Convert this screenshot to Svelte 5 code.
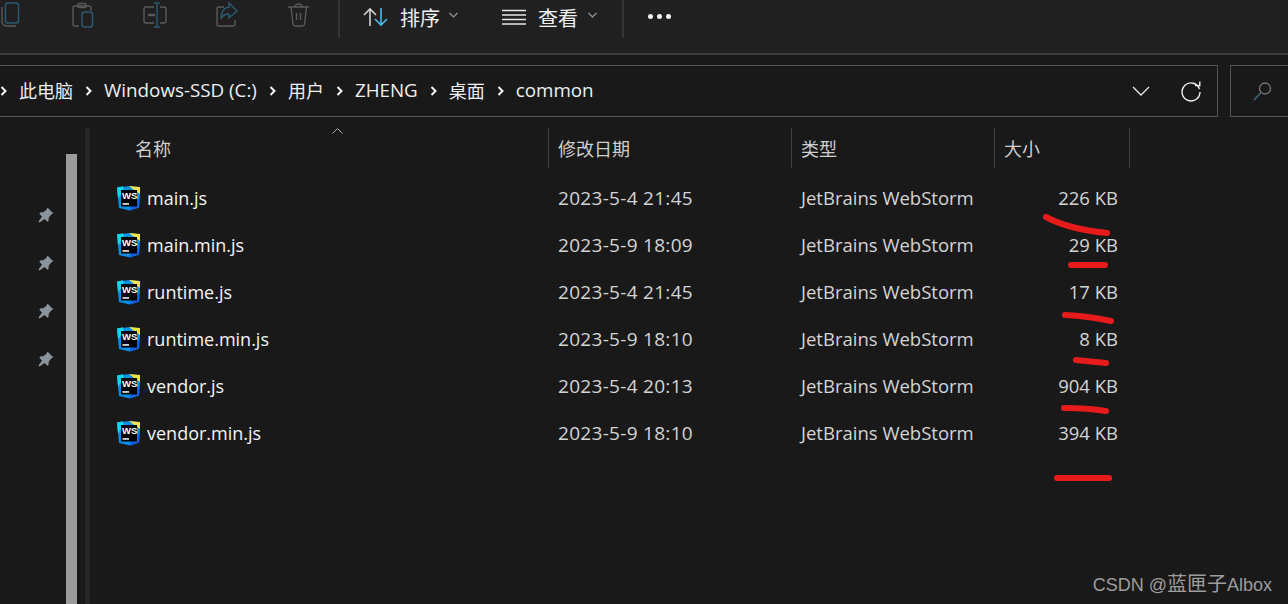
<script>
  const files = [
    { name: "main.js", date: "2023-5-4 21:45", size: "226 KB" },
    { name: "main.min.js", date: "2023-5-9 18:09", size: "29 KB" },
    { name: "runtime.js", date: "2023-5-4 21:45", size: "17 KB" },
    { name: "runtime.min.js", date: "2023-5-9 18:10", size: "8 KB" },
    { name: "vendor.js", date: "2023-5-4 20:13", size: "904 KB" },
    { name: "vendor.min.js", date: "2023-5-9 18:10", size: "394 KB" },
  ];
  const crumbs = ["此电脑", "Windows-SSD (C:)", "用户", "ZHENG", "桌面", "common"];
  const marks = [
    "M1046 217Q1068 229 1107 233",
    "M1071 265L1105 265",
    "M1065 315Q1088 316 1111 321",
    "M1076 360L1106 363",
    "M1064 408Q1088 408 1106 411",
    "M1057 478L1109 478",
  ];
  const isLatin = (s) => /^[\x00-\x7f]+$/.test(s);
</script>

<div class="page">
  <div class="toolbar">
    <div class="tools">
      <button>
        <svg width="24" height="28" viewBox="0 0 24 28" fill="none" stroke-width="1.4">
          <path d="M3 6v14q0 5 5 5h9" stroke="#5a5a5a" />
          <rect x="6.5" y="2" width="13" height="20" rx="2.5" stroke="#2b5a73" />
        </svg>
      </button>
      <button>
        <svg width="24" height="28" viewBox="0 0 24 28" fill="none" stroke-width="1.4">
          <path d="M8 25H4q-2 0-2-2V7q0-2 2-2h14q2 0 2 2v3" stroke="#5a5a5a" />
          <rect x="7" y="2.5" width="8" height="4" rx="1" stroke="#5a5a5a" />
          <rect x="11" y="11" width="10.500" height="15" rx="2.500" stroke="#2b5a73" />
        </svg>
      </button>
      <button>
        <svg width="26" height="28" viewBox="0 0 26 28" fill="none" stroke-width="1.4">
          <path d="M12 6H4q-2 0-2 2v12q0 2 2 2h8M18 6h4q2 0 2 2v12q0 2-2 2h-4" stroke="#5a5a5a" />
          <path d="M15 2v24M12 2h6M12 26h6" stroke="#2b5a73" />
          <path d="M6 14h7" stroke="#5a5a5a" stroke-width="2.400" />
        </svg>
      </button>
      <button>
        <svg width="24" height="28" viewBox="0 0 24 28" fill="none" stroke-width="1.4">
          <path d="M9 6H4Q2 6 2 8v15q0 2 2 2h14q2 0 2-2v-4" stroke="#5a5a5a" />
          <path d="M14 6V2l8 8-8 7v-4q-6 0-8 5 0-11 8-12z" stroke="#2b5a73" />
        </svg>
      </button>
      <button>
        <svg width="24" height="28" viewBox="0 0 24 28" fill="none" stroke="#5a5a5a" stroke-width="1.4">
          <path d="M1 6h21M8 6q0-3 3.500-3T15 6M4 6l2 17q.3 2 2.300 2h7q2 0 2.300-2L19.500 6M9.500 12v7M13.500 12v7" />
        </svg>
      </button>
    </div>
    <span class="sep first"></span>
    <div class="menu sort">
      <svg width="26" height="20" viewBox="0 0 26 20" fill="none" stroke-width="1.600">
        <path d="M7 19V2M1 8l6-6 6 6" stroke="#cfcfcf" />
        <path d="M18 1v17M12 12l6 6 6-6" stroke="#4cb8ee" />
      </svg>
      <span class="menu-label">排序</span>
      <svg class="caret" width="9" height="6" viewBox="0 0 9 6" fill="none" stroke="#9a9a9a" stroke-width="1.100"><path d="M.5 1l4 4 4-4" /></svg>
    </div>
    <div class="menu view">
      <svg width="24" height="16" viewBox="0 0 24 16" fill="none" stroke="#e6e6e6" stroke-width="1.300">
        <path d="M0 1.500h24M0 6h24M0 10.500h24M0 15h24" />
      </svg>
      <span class="menu-label">查看</span>
      <svg class="caret" width="9" height="6" viewBox="0 0 9 6" fill="none" stroke="#9a9a9a" stroke-width="1.100"><path d="M.5 1l4 4 4-4" /></svg>
    </div>
    <span class="sep second"></span>
    <div class="dots"><i></i><i></i><i></i></div>
  </div>

  <div class="address-row">
    <div class="address">
      <div class="crumbs">
        <svg class="chev" width="7" height="10" viewBox="0 0 7 10" fill="none" stroke="#f4f4f4" stroke-width="2"><path d="M1.500 1l4 4-4 4" /></svg>
        {#each crumbs as c, i}
          {#if i > 0}
            <svg class="chev" width="7" height="10" viewBox="0 0 7 10" fill="none" stroke="#f4f4f4" stroke-width="2"><path d="M1.500 1l4 4-4 4" /></svg>
          {/if}
          <span class:latin={isLatin(c)}>{c}</span>
        {/each}
      </div>
      <div class="addr-actions">
        <svg width="18" height="10" viewBox="0 0 18 10" fill="none" stroke="#e8e8e8" stroke-width="1.300"><path d="M1 1l8 8 8-8" /></svg>
        <svg width="21" height="21" viewBox="0 0 21 21" fill="none" stroke="#f0f0f0" stroke-width="1.400">
          <path d="M18.500 8A9 9 0 1 0 19 11M14 4.500l4.800 0 0-4" />
        </svg>
      </div>
    </div>
    <div class="search">
      <svg width="19" height="19" viewBox="0 0 19 19" fill="none" stroke-width="1.300">
        <circle cx="12" cy="6.500" r="5.500" stroke="#777" />
        <path d="M8 10.500L1 18" stroke="#3f6f8a" />
      </svg>
    </div>
  </div>

  <div class="body">
    <div class="nav">
      {#each [0, 1, 2, 3] as p (p)}
        <svg class="pin" width="16" height="16" viewBox="0 0 16 16" fill="#8b949b">
          <path d="M9.500 .5l6 6-1.600.6-3 3.200-.4 3.700-1.200 .8-2.800-2.800L1.500 15.500 .5 14.500l3.500-5L1.400 6.700l.8-1.200 3.700-.4 3-3z" />
        </svg>
      {/each}
    </div>
    <div class="track"><div class="thumb"></div></div>
    <div class="divider"></div>
    <div class="list">
      <div class="head">
        <svg class="sort-arrow" width="11" height="6" viewBox="0 0 11 6" fill="none" stroke="#a8a8a8" stroke-width="1"><path d="M.5 5.500l5-5 5 5" /></svg>
        <div class="cell c-name">名称</div>
        <div class="cell c-date">修改日期</div>
        <div class="cell c-type">类型</div>
        <div class="cell c-size">大小</div>
      </div>
      {#each files as f (f.name)}
        <div class="row">
          <div class="name">
            <svg width="25" height="26" viewBox="0 0 25 26">
              <path d="M1 2.500L14 1l10 1.500v6l-1 14-9 3-11-2.500z" fill="#0a8fe6" />
              <path d="M13 1l11 1v7l-6-4z" fill="#f3e24a" />
              <path d="M1 2.500l6-1.200 1 5-6 7z" fill="#12d6ee" />
              <path d="M13 25.500l10-3 .6-9-7 5z" fill="#0f5fe8" />
              <rect x="5" y="5" width="16" height="16.500" fill="#000" />
              <text x="6" y="13.800" class="ws">WS</text>
              <rect x="6.500" y="18.200" width="6.500" height="1.500" fill="#fff" />
            </svg>
            <span>{f.name}</span>
          </div>
          <div class="date">{f.date}</div>
          <div class="type">JetBrains WebStorm</div>
          <div class="size">{f.size}</div>
        </div>
      {/each}
    </div>
  </div>

  <svg class="marks" width="1288" height="604" fill="none" stroke="#e81b1c" stroke-width="6" stroke-linecap="round">
    {#each marks as d (d)}
      <path {d} />
    {/each}
  </svg>
  <div class="watermark">CSDN @<span>蓝匣子</span>Albox</div>
</div>

<style>
  :global(body) {
    margin: 0;
    background: #191919;
  }
  .page {
    position: relative;
    width: 1288px;
    height: 604px;
    overflow: hidden;
    background: #191919;
    color: #f2f2f2;
    font-family: "Open Sans", "Noto Sans CJK SC", sans-serif;
    font-size: 18px;
  }
  .toolbar {
    display: flex;
    align-items: flex-start;
    height: 53px;
    box-sizing: content-box;
    background: #202020;
    border-bottom: 2px solid #3b3b3b;
  }
  .tools {
    display: flex;
    margin-left: -25px;
  }
  .tools button {
    display: flex;
    justify-content: center;
    width: 72px;
    height: 30px;
    padding: 1px 0 0;
    border: 0;
    background: none;
  }
  .sep {
    width: 2px;
    height: 38px;
    background: #353535;
  }
  .sep.first { margin-left: 3px; }
  .sep.second { margin-left: 25px; }
  .menu {
    display: flex;
    align-items: center;
    height: 34px;
  }
  .menu-label {
    font-size: 20px;
    color: #f0f0f0;
  }
  .sort { margin-left: 23px; gap: 11px; }
  .view { margin-left: 44px; gap: 12px; }
  .caret { margin-left: -2px; margin-top: -5px; }
  .dots {
    display: flex;
    gap: 4px;
    margin: 14px 0 0 24px;
  }
  .dots i {
    width: 5px;
    height: 5px;
    border-radius: 50%;
    background: #f4f4f4;
  }
  .address-row {
    display: flex;
    gap: 12px;
    margin: 10px -6px 0 -2px;
  }
  .address, .search {
    box-sizing: border-box;
    height: 52px;
    border: 1px solid #555;
    display: flex;
    align-items: center;
  }
  .address {
    width: 1220px;
    padding-left: 1px;
    justify-content: space-between;
  }
  .search {
    flex: 1;
    padding-left: 22px;
  }
  .crumbs {
    display: flex;
    align-items: center;
    gap: 12px;
    padding-bottom: 2px;
    white-space: nowrap;
    font-size: 18px;
    color: #efefef;
  }
  .crumbs .latin { font-size: 18.800px; }
  .crumbs .chev { margin-top: 2px; }
  .addr-actions {
    display: flex;
    align-items: center;
    gap: 31px;
    padding-right: 15px;
  }
  .body {
    display: flex;
    height: 489px;
    margin-top: 11px;
  }
  .nav {
    width: 68px;
    display: flex;
    flex-direction: column;
    align-items: flex-end;
    gap: 32px;
    padding: 79px 14px 0 0;
    box-sizing: border-box;
    margin-right: -2px;
  }
  .track {
    width: 11px;
    padding-top: 26px;
  }
  .thumb {
    height: 100%;
    background: #9b9b9b;
  }
  .divider {
    width: 5px;
    height: 100%;
    margin-left: 8px;
    background: #262626;
  }
  .list {
    flex: 1;
    min-width: 0;
  }
  .head {
    position: relative;
    display: flex;
    height: 40px;
    margin-bottom: 6px;
    font-size: 18px;
    color: #cfcfcf;
  }
  .sort-arrow {
    position: absolute;
    left: 242px;
    top: 0;
  }
  .cell {
    display: flex;
    align-items: center;
    box-sizing: border-box;
    padding-left: 9px;
    border-right: 1px solid #3f3f3f;
  }
  .c-name { width: 459px; padding-left: 45px; }
  .c-date { width: 243px; }
  .c-type { width: 203px; }
  .c-size { width: 135px; }
  .row {
    display: flex;
    align-items: center;
    height: 47px;
    color: #d4d4d4;
  }
  .name {
    display: flex;
    align-items: center;
    gap: 6px;
    width: 459px;
    padding-left: 26px;
    box-sizing: border-box;
    color: #f4f4f4;
  }
  .date {
    width: 243px;
    padding-left: 9px;
    box-sizing: border-box;
    font-size: 19px;
    letter-spacing: .3px;
  }
  .type {
    width: 203px;
    padding-left: 9px;
    box-sizing: border-box;
    font-size: 18.500px;
  }
  .size {
    width: 123px;
    text-align: right;
    font-size: 18.500px;
  }
  .ws {
    font-family: "Liberation Sans", sans-serif;
    font-size: 9.500px;
    font-weight: 700;
    fill: #fff;
  }
  .marks {
    position: absolute;
    left: 0;
    top: 0;
    pointer-events: none;
  }
  .watermark {
    position: absolute;
    right: 16px;
    bottom: 7px;
    font-family: "Liberation Sans", "Noto Sans CJK SC", sans-serif;
    font-size: 18px;
    color: #9d9d9d;
  }
  .watermark span { font-size: 20px; }
</style>
